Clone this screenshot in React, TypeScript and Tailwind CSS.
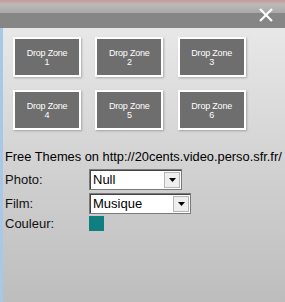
import { useState } from 'react'

const zones = [1, 2, 3, 4, 5, 6]

function FakeSelect({ value, width }: { value: string; width: string }) {
	return (
		<div
			className={`flex h-[21px] items-center justify-between border border-[#7a7a7a] bg-white pl-[3px] pr-[1px] shadow-[inset_1px_1px_0_#444] ${width}`}
		>
			<span className="text-[13px] leading-none text-black">{value}</span>
			<span className="flex h-[16px] w-[16px] items-center justify-center border border-[#b5b5b5] bg-[#eeeeee]">
				<svg width="7" height="4" viewBox="0 0 7 4">
					<path d="M0 0h7L3.5 4z" fill="#000" />
				</svg>
			</span>
		</div>
	)
}

export default function App() {
	const [photo] = useState('Null')
	const [film] = useState('Musique')

	return (
		<div className="relative h-[302px] w-[285px] overflow-hidden font-['Liberation_Sans',Arial,sans-serif]">
			<div className="h-[4px] bg-gradient-to-b from-[#c79a9c] to-[#bfb5b5]" />
			<div className="h-[9px] bg-gradient-to-b from-[#bdbaba] to-[#a9a9a9]" />
			<div className="flex h-[15px] items-start justify-end bg-[#868686] pr-[11px]">
				<svg width="16" height="16" viewBox="0 0 16 16" className="-mt-[6px]">
					<path d="M2 2L14 14M14 2L2 14" stroke="#fff" strokeWidth="2.2" />
				</svg>
			</div>
			<div className="flex h-[274px] flex-col border-l-[3px] border-[#a9c8e8] bg-gradient-to-b from-[#e8e8e8] via-[#d2d2d2] to-[#bdbdbd] pl-[2px]">
				<div className="mt-[9px] grid w-[240px] grid-cols-3 gap-x-[15px] gap-y-[13px] pl-[8px]">
					{zones.map(n => (
						<div
							key={n}
							className="flex h-[40px] w-[68px] flex-col items-center border-2 border-white bg-[#6e6e6e] pt-[10px] text-[9px] leading-[9px] tracking-[-0.2px] text-white shadow-[1px_1px_2px_rgba(0,0,0,0.25)]"
						>
							<span>Drop Zone</span>
							<span>{n}</span>
						</div>
					))}
				</div>
				<div className="mt-[19px] whitespace-nowrap text-[12.85px] leading-[15px] text-black">
					Free Themes on http://20cents.video.perso.sfr.fr/
				</div>
				<div className="mt-[5px] grid grid-cols-[84px_auto] gap-y-[2px] text-[13px] text-[#111]">
					<span className="leading-[21px]">Photo:</span>
					<FakeSelect value={photo} width="w-[93px]" />
					<span className="mt-[1px] leading-[21px]">Film:</span>
					<div className="mt-[1px]">
						<FakeSelect value={film} width="w-[102px]" />
					</div>
					<span className="leading-[16px]">Couleur:</span>
					<div className="h-[15px] w-[15px] bg-[#0f7f7f]" />
				</div>
			</div>
		</div>
	)
}
